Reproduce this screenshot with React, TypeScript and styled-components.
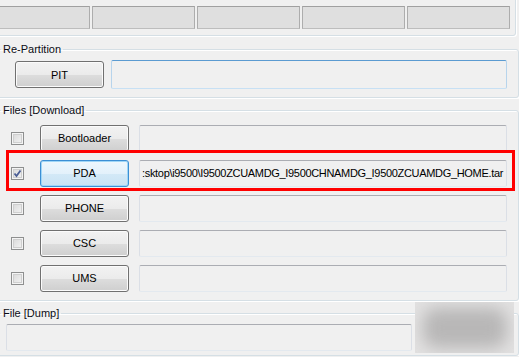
import React from 'react'
import styled, { createGlobalStyle, css } from 'styled-components'

const GlobalStyle = createGlobalStyle`
  html, body {
    margin: 0;
    padding: 0;
    background: #f0f0f0;
    overflow: hidden;
  }
  body {
    font-family: 'Liberation Sans', Arial, sans-serif;
    font-size: 11px;
    color: #000;
  }
`

const Page = styled.div`
  display: flex;
  flex-direction: column;
  width: 535px;
  margin-left: -16px;
`

const groupLines = css`
  border: 1px solid #d5dfe5;
  border-radius: 3px;
  box-shadow: inset 1px 1px 0 #fff, 1px 1px 0 #fff;
`

const StatusGroup = styled.div`
  ${groupLines};
  margin: -10px 3px 0 0;
  padding: 15px 5px 6px 2px;
  display: grid;
  grid-template-columns: repeat(5, 103px);
  gap: 2px;
`

const StatusBox = styled.div`
  height: 23px;
  box-sizing: border-box;
  background: #dfdfdf;
  border: 1px solid #adadad;
  border-top-color: #a0a0a0;
  border-bottom-color: #bdbdbd;
`

const Group = styled.fieldset<{ $top: number; $left: number; $pad: string }>`
  ${groupLines};
  margin: ${(p) => p.$top}px 0 0 0;
  padding: ${(p) => p.$pad};
  padding-left: ${(p) => p.$left}px;
  min-width: 0;
`

// legend sits at the fieldset's padding edge, so pull it back to x = 1
const Legend = styled.legend<{ $left: number }>`
  padding: 0 2px;
  margin-left: ${(p) => 16 - p.$left}px;
  line-height: 13px;
  font-size: 11px;
  color: #0c0c14;
`

const Row = styled.div`
  position: relative;
  display: flex;
  align-items: center;
  height: 26px;
`

const Rows = styled.div`
  display: flex;
  flex-direction: column;
  gap: 9px;
`

const Button = styled.div<{ $focus?: boolean }>`
  box-sizing: border-box;
  width: 89px;
  height: 27px;
  flex: none;
  display: flex;
  align-items: center;
  justify-content: center;
  border-radius: 3px;
  font-size: 11px;
  color: #000;
  border: 1px solid #707070;
  background: linear-gradient(#f2f2f2 0%, #ebebeb 50%, #dddddd 51%, #cfcfcf 100%);
  box-shadow: inset 0 0 0 1px #fbfbfb;
  ${(p) =>
    p.$focus &&
    css`
      border-color: #3c8fd4;
      background: linear-gradient(#eef7fd 0%, #e3f1fb 50%, #d3e9f7 51%, #c9e3f4 100%);
      box-shadow: inset 0 0 0 1px #9fd6f7;
    `}
`

const Field = styled.div<{ $hot?: boolean; $w?: number }>`
  box-sizing: border-box;
  height: 27px;
  ${(p) => (p.$w ? `width: ${p.$w}px; flex: none;` : 'flex: 1;')}
  display: flex;
  align-items: center;
  padding-left: 2px;
  overflow: hidden;
  white-space: nowrap;
  border-radius: 2px;
  border: 1px solid #dbdfe6;
  border-top-color: #abadb3;
  border-bottom-color: #e3e9ef;
  background: #f0f0f0;
  font-size: 11px;
  letter-spacing: -0.32px;
  ${(p) =>
    p.$hot &&
    css`
      border-color: #b7d4ec;
      border-top-color: #5b9bd1;
      border-bottom-color: #c7e0f4;
    `}
`

const Check = styled.div`
  box-sizing: border-box;
  width: 13px;
  height: 13px;
  flex: none;
  border: 1px solid #8e8f8f;
  background: linear-gradient(135deg, #d6d6d6, #f6f6f6);
  box-shadow: inset 0 0 0 1px #f4f4f4, inset 0 0 0 2px #cfcfcf;
  display: flex;
  align-items: center;
  justify-content: center;
`

const Highlight = styled.span`
  position: absolute;
  left: -5px;
  right: -8px;
  top: -10px;
  bottom: -5px;
  border: 3px solid #ff0000;
  pointer-events: none;
`

const Censor = styled.div`
  position: absolute;
  left: 409px;
  top: -22px;
  width: 99px;
  height: 51px;
  background: #e2e1e1;
  overflow: hidden;
`

const Smudge = styled.div`
  position: absolute;
  left: 8px;
  top: 6px;
  width: 84px;
  height: 40px;
  background: #b8b7b7;
  border-radius: 14px;
  filter: blur(8px);
`

const CheckMark = () => (
  <svg width="9" height="9" viewBox="0 0 9 9">
    <path d="M1.5 4.5 L3.5 7 L7.5 1.5" fill="none" stroke="#4b5e95" strokeWidth="1.8" />
  </svg>
)

const files = [
  { name: 'Bootloader', checked: false, path: '' },
  { name: 'PDA', checked: true, path: ':sktop\\i9500\\I9500ZCUAMDG_I9500CHNAMDG_I9500ZCUAMDG_HOME.tar' },
  { name: 'PHONE', checked: false, path: '' },
  { name: 'CSC', checked: false, path: '' },
  { name: 'UMS', checked: false, path: '' },
]

const App = () => {
  return (
    <>
      <GlobalStyle />
      <Page>
        <StatusGroup>
          {[0, 1, 2, 3, 4].map((i) => (
            <StatusBox key={i} />
          ))}
        </StatusGroup>

        <Group $top={7} $left={30} $pad="4px 11px 8px">
          <Legend $left={30}>Re-Partition</Legend>
          <Row style={{ height: 29, gap: 7 }}>
            <Button>PIT</Button>
            <Field $hot style={{ height: 29 }} />
          </Row>
        </Group>

        <Group $top={6} $left={26} $pad="8px 11px 9px">
          <Legend $left={26}>Files [Download]</Legend>
          <Rows>
            {files.map((f) => (
              <Row key={f.name}>
                <Check>{f.checked && <CheckMark />}</Check>
                <Button $focus={f.checked} style={{ marginLeft: 16 }}>
                  {f.name}
                </Button>
                <Field style={{ marginLeft: 10 }}>{f.path}</Field>
                {f.checked && <Highlight />}
              </Row>
            ))}
          </Rows>
        </Group>

        <Group $top={6} $left={21} $pad="4px 11px 5px">
          <Legend $left={21}>File [Dump]</Legend>
          <Row>
            <Field $w={406} />
            <Censor>
              <Smudge />
            </Censor>
          </Row>
        </Group>
      </Page>
    </>
  )
}

export default App
